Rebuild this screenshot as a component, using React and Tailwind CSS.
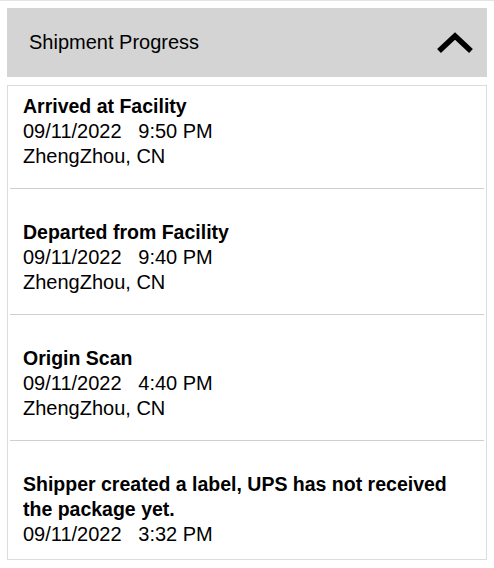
const events = [
  { title: 'Arrived at Facility', date: '09/11/2022', time: '9:50 PM', place: 'ZhengZhou, CN' },
  { title: 'Departed from Facility', date: '09/11/2022', time: '9:40 PM', place: 'ZhengZhou, CN' },
  { title: 'Origin Scan', date: '09/11/2022', time: '4:40 PM', place: 'ZhengZhou, CN' },
  { title: 'Shipper created a label, UPS has not received the package yet.', date: '09/11/2022', time: '3:32 PM' },
];

function Chevron() {
  return (
    <svg width="38" height="24" viewBox="0 0 38 24" className="block">
      <path d="M3 20 L19 5 L35 20" fill="none" stroke="#000" strokeWidth="5.5" strokeLinejoin="miter" />
    </svg>
  );
}

export default function App() {
  return (
    <div className="w-[494px] h-[568px] bg-white border-t border-[#e4e4e4] pt-[7px] px-[7px] text-black" style={{ fontFamily: '"Liberation Sans", Arial, sans-serif' }}>
      {/* Header */}
      <div className="h-[69px] bg-[#d4d4d4] flex items-center justify-between pl-[22px] pr-[13px]">
        <span className="text-[20px] -mt-[2px]">Shipment Progress</span>
        <Chevron />
      </div>

      {/* Events */}
      <div className="mt-[8px] h-[475px] border border-[#dcdcdc] px-[2px] overflow-hidden">
        {events.map((ev, i) => (
          <div
            key={i}
            className={`pl-[13px] pr-[12px] text-[20px] leading-[25px] ${i === 0 ? 'pt-[8px]' : 'pt-[31px]'} ${i < events.length - 1 ? 'pb-[19px] border-b border-[#cfcfcf]' : ''}`}
          >
            <div className="font-bold text-[19.5px]">{ev.title}</div>
            <div className="whitespace-pre">{ev.date}   {ev.time}</div>
            {ev.place && <div>{ev.place}</div>}
          </div>
        ))}
      </div>
    </div>
  );
}
